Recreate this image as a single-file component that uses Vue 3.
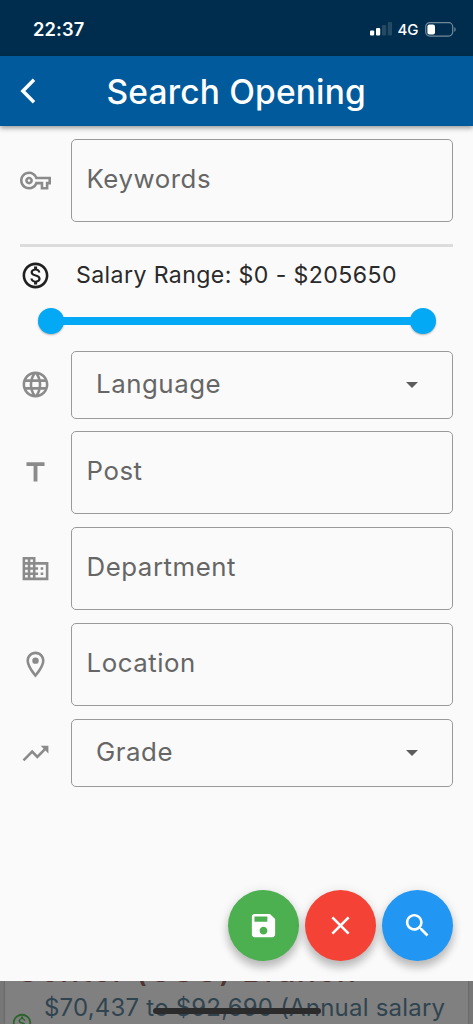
<script setup>
const icons = {
  key: 'M22 19h-6v-4h-2.68c-1.14 2.42-3.6 4-6.32 4-3.86 0-7-3.14-7-7s3.14-7 7-7c2.72 0 5.17 1.58 6.32 4H24v6h-2v4zm-4-2h2v-4h2v-2H11.94l-.23-.67C11.01 8.34 9.11 7 7 7c-2.76 0-5 2.24-5 5s2.24 5 5 5c2.11 0 4.01-1.34 4.71-3.33l.23-.67H18v4zM7 15c-1.65 0-3-1.35-3-3s1.35-3 3-3 3 1.35 3 3-1.35 3-3 3zm0-4c-.55 0-1 .45-1 1s.45 1 1 1 1-.45 1-1-.45-1-1-1z',
  money: 'M12 2C6.48 2 2 6.48 2 12s4.48 10 10 10 10-4.48 10-10S17.52 2 12 2zm0 18c-4.41 0-8-3.59-8-8s3.59-8 8-8 8 3.59 8 8-3.59 8-8 8zm.31-8.86c-1.77-.45-2.34-.94-2.34-1.67 0-.84.79-1.43 2.1-1.43 1.38 0 1.9.66 1.94 1.64h1.71c-.05-1.34-.87-2.57-2.49-2.97V5H10.9v1.69c-1.51.32-2.72 1.3-2.72 2.81 0 1.79 1.49 2.69 3.66 3.21 1.95.46 2.34 1.15 2.34 1.87 0 .53-.39 1.39-2.1 1.39-1.6 0-2.23-.72-2.32-1.64H8.04c.1 1.7 1.36 2.66 2.86 2.97V19h2.34v-1.67c1.52-.29 2.72-1.16 2.73-2.77-.01-2.2-1.9-2.96-3.66-3.42z',
  globe: 'M11.99 2C6.47 2 2 6.48 2 12s4.47 10 9.99 10C17.52 22 22 17.52 22 12S17.52 2 11.99 2zm6.93 6h-2.95c-.32-1.25-.78-2.45-1.38-3.56 1.84.63 3.37 1.91 4.33 3.56zM12 4.04c.83 1.2 1.48 2.53 1.91 3.96h-3.82c.43-1.43 1.08-2.76 1.91-3.96zM4.26 14C4.1 13.36 4 12.69 4 12s.1-1.36.26-2h3.38c-.08.66-.14 1.32-.14 2 0 .68.06 1.34.14 2H4.26zm.82 2h2.95c.32 1.25.78 2.45 1.38 3.56-1.84-.63-3.37-1.9-4.33-3.56zm2.95-8H5.08c.96-1.66 2.49-2.93 4.33-3.56C8.81 5.55 8.35 6.75 8.03 8zM12 19.96c-.83-1.2-1.48-2.53-1.91-3.96h3.82c-.43 1.43-1.08 2.76-1.91 3.96zM14.34 14H9.66c-.09-.66-.16-1.32-.16-2 0-.68.07-1.35.16-2h4.68c.09.65.16 1.32.16 2 0 .68-.07 1.34-.16 2zm.25 5.56c.6-1.11 1.06-2.31 1.38-3.56h2.95c-.96 1.65-2.49 2.93-4.33 3.56zM16.36 14c.08-.66.14-1.32.14-2 0-.68-.06-1.34-.14-2h3.38c.16.64.26 1.31.26 2s-.1 1.36-.26 2h-3.38z',
  title: 'M5 4v3h5.5v12h3V7H19V4z',
  building: 'M12 7V3H2v18h20V7H12zM6 19H4v-2h2v2zm0-4H4v-2h2v2zm0-4H4V9h2v2zm0-4H4V5h2v2zm4 12H8v-2h2v2zm0-4H8v-2h2v2zm0-4H8V9h2v2zm0-4H8V5h2v2zm10 12h-8v-2h2v-2h-2v-2h2v-2h-2V9h8v10zm-2-8h-2v2h2v-2zm0 4h-2v2h2v-2z',
  place: 'M12 2C8.13 2 5 5.13 5 9c0 5.25 7 13 7 13s7-7.75 7-13c0-3.87-3.13-7-7-7zM7 9c0-2.76 2.24-5 5-5s5 2.24 5 5c0 2.88-2.88 7.19-5 9.88C9.92 16.21 7 11.85 7 9zM12 6.5a2.5 2.5 0 1 0 0 5 2.5 2.5 0 0 0 0-5z',
  trend: 'M16 6l2.29 2.29-4.88 4.88-4-4L2 16.59 3.41 18l6-6 4 4 6.3-6.29L22 12V6z',
  save: 'M17 3H5c-1.11 0-2 .9-2 2v14c0 1.1.89 2 2 2h14c1.1 0 2-.9 2-2V7l-4-4zm-5 16c-1.66 0-3-1.34-3-3s1.34-3 3-3 3 1.34 3 3-1.34 3-3 3zm3-10H5V5h10v4z',
  close: 'M19 6.41L17.59 5 12 10.59 6.41 5 5 6.41 10.59 12 5 17.59 6.41 19 12 13.41 17.59 19 19 17.59 13.41 12z',
  search: 'M15.5 14h-.79l-.28-.27C15.41 12.59 16 11.11 16 9.5 16 5.91 13.09 3 9.5 3S3 5.91 3 9.5 5.91 16 9.5 16c1.61 0 3.09-.59 4.23-1.57l.27.28v.79l5 4.99L20.49 19l-4.99-5zm-6 0C7.01 14 5 11.99 5 9.5S7.01 5 9.5 5 14 7.01 14 9.5 11.99 14 9.5 14z',
}

const fields = [
  { label: 'Language', icon: 'globe', select: true },
  { label: 'Post', icon: 'title' },
  { label: 'Department', icon: 'building' },
  { label: 'Location', icon: 'place' },
  { label: 'Grade', icon: 'trend', select: true },
]

const actions = ['save', 'close', 'search']
</script>

<template>
  <div class="screen">
    <div class="status">
      <span class="time">22:37</span>
      <div class="indicators">
        <svg class="signal" width="22" height="14" viewBox="0 0 22 14">
          <rect x="0" y="8.5" width="4.2" height="5" rx="1" fill="#fff" />
          <rect x="6" y="6" width="4.2" height="7.5" rx="1" fill="#fff" />
          <rect x="12" y="3" width="4.2" height="10.5" rx="1" fill="#264a64" />
          <rect x="17.8" y="0" width="4.2" height="13.5" rx="1" fill="#264a64" />
        </svg>
        <span class="network">4G</span>
        <svg class="battery" width="31" height="15" viewBox="0 0 31 15">
          <rect x=".7" y=".7" width="27" height="13.4" rx="4" fill="none" stroke="#72899a" stroke-width="1.2" />
          <rect x="2.4" y="2.4" width="7.6" height="10" rx="2" fill="#fff" />
          <path d="M29.3 5v4.800c1.800-.8 1.800-4 0-4.800z" fill="#72899a" />
        </svg>
      </div>
    </div>

    <header class="appbar">
      <svg class="back" width="16" height="26" viewBox="0 0 16 26">
        <path d="M14 1.800 2.900 13 14 24.200" fill="none" stroke="#fff" stroke-width="3.500" />
      </svg>
      <h1>Search Opening</h1>
    </header>

    <main>
      <div class="row">
        <svg class="icon" viewBox="0 0 24 24"><path :d="icons.key" /></svg>
        <div class="box"><span>Keywords</span></div>
      </div>
      <div class="divider"></div>
      <div class="row salary">
        <svg class="icon" viewBox="0 0 24 24"><path :d="icons.money" /></svg>
        <span class="range">Salary Range: $0 - $205650</span>
      </div>
      <div class="slider">
        <i class="thumb"></i><i class="track"></i><i class="thumb"></i>
      </div>
      <div class="fields">
        <div v-for="f in fields" :key="f.label" class="row">
          <svg class="icon" viewBox="0 0 24 24"><path :d="icons[f.icon]" /></svg>
          <div class="box" :class="{ select: f.select }">
            <span>{{ f.label }}</span>
            <svg v-if="f.select" class="caret" width="12" height="6" viewBox="0 0 12 6"><path d="M0 0h12L6 6z" /></svg>
          </div>
        </div>
      </div>
      <div class="actions">
        <button v-for="a in actions" :key="a" :class="a">
          <svg class="icon" viewBox="0 0 24 24"><path :d="icons[a]" /></svg>
        </button>
      </div>
    </main>

    <div class="behind">
      <div class="card">
        <div class="heading">Center (CSC) Branch</div>
        <div class="pay">$70,437 to $92,690 (Annual salary</div>
        <svg class="coin" viewBox="0 0 24 24"><path :d="icons.money" /></svg>
      </div>
      <div class="home"></div>
    </div>
  </div>
</template>

<style>
body { margin: 0; }
</style>

<style scoped>
.screen {
  width: 473px; height: 1024px; overflow: hidden;
  display: flex; flex-direction: column;
  background: #fafafa;
  font-family: Inter, "Liberation Sans", sans-serif;
}
.status {
  height: 55.500px; flex: none; box-sizing: border-box;
  padding: 3px 17.500px 0 33px;
  display: flex; align-items: center; justify-content: space-between;
  background: #002d4d; color: #fff;
}
.time { font-size: 18.300px; font-weight: 600; letter-spacing: .15px; }
.indicators { display: flex; align-items: center; }
.network { font-size: 15px; font-weight: 500; margin: 0 6px 0 5.500px; }
.appbar {
  height: 70.500px; flex: none; box-sizing: border-box;
  padding-left: 20px; display: flex; align-items: center;
  background: #005a9c; color: #fff;
  box-shadow: 0 2px 5px rgba(0, 0, 0, .4);
}
.back { flex: none; }
h1 {
  margin: 2px 0 0 70.500px; font-size: 33.500px; line-height: 40px;
  font-weight: 500; letter-spacing: .18px; white-space: nowrap;
}
main {
  height: 855px; flex: none; box-sizing: border-box;
  padding: 13px 20px 0; display: flex; flex-direction: column;
}
.row { display: flex; align-items: center; }
.icon { width: 31px; height: 31px; flex: none; fill: #8b8b8b; display: block; }
.box {
  flex: 1; height: 83px; margin-left: 20px; padding: 0 34px 5px 14.500px;
  box-sizing: border-box; border: 1px solid #999; border-radius: 5px;
  display: flex; align-items: center; justify-content: space-between;
  font-size: 25.800px; letter-spacing: .55px; font-weight: 380; color: #666; white-space: nowrap;
}
.box.select { height: 68px; padding: 0 34px 3px 24px; }
.caret { fill: #5c5c5c; margin-top: 3px; }
.divider { height: 3px; flex: none; margin-top: 22px; background: #dcdcdc; }
.salary { margin-top: 12.500px; }
.salary .icon { fill: #202020; }
.range { margin-left: 25px; font-size: 23.100px; letter-spacing: .4px; font-weight: 380; color: #2a2a2a; white-space: nowrap; }
.slider { display: flex; align-items: center; margin: 17px 17.500px 0; height: 26px; }
.thumb {
  width: 26px; height: 26px; flex: none; border-radius: 50%;
  background: #03a9f4; box-shadow: 0 1px 2px rgba(0, 0, 0, .3);
}
.track { flex: 1; height: 8px; margin: 0 -3px; background: #03a9f4; z-index: 1; }
.fields { display: flex; flex-direction: column; gap: 12.900px; margin-top: 17px; }
.actions { display: flex; justify-content: flex-end; gap: 6px; margin-top: 102.500px; }
button {
  width: 71px; height: 71px; padding: 0; border: 0; border-radius: 50%;
  display: grid; place-items: center;
  box-shadow: 0 7px 9px rgba(0, 0, 0, .2), 0 2px 12px rgba(0, 0, 0, .12);
}
button .icon { fill: #fff; }
.save { background: #4caf50; }
.close { background: #f44336; }
.search { background: #2196f3; }
.behind { position: relative; height: 43px; flex: none; padding: 0 5px; background: #777; overflow: hidden; }
.card { position: relative; height: 43px; background: #808080; box-shadow: 0 0 2px #555; }
.heading {
  position: absolute; left: 10.500px; top: -29px; font-size: 32px; line-height: 38px;
  font-weight: 500; letter-spacing: 1.150px; color: #4f3430; white-space: nowrap;
}
.pay {
  position: absolute; left: 39px; top: 12px; font-size: 24px; line-height: 30px;
  letter-spacing: .2px; color: #304450; white-space: nowrap;
}
.coin { position: absolute; left: 6px; top: 31px; width: 22px; height: 22px; fill: #2a632c; }
.home { position: absolute; left: 153px; top: 27px; width: 168px; height: 6px; border-radius: 3px; background: #2b2b2b; }
</style>
